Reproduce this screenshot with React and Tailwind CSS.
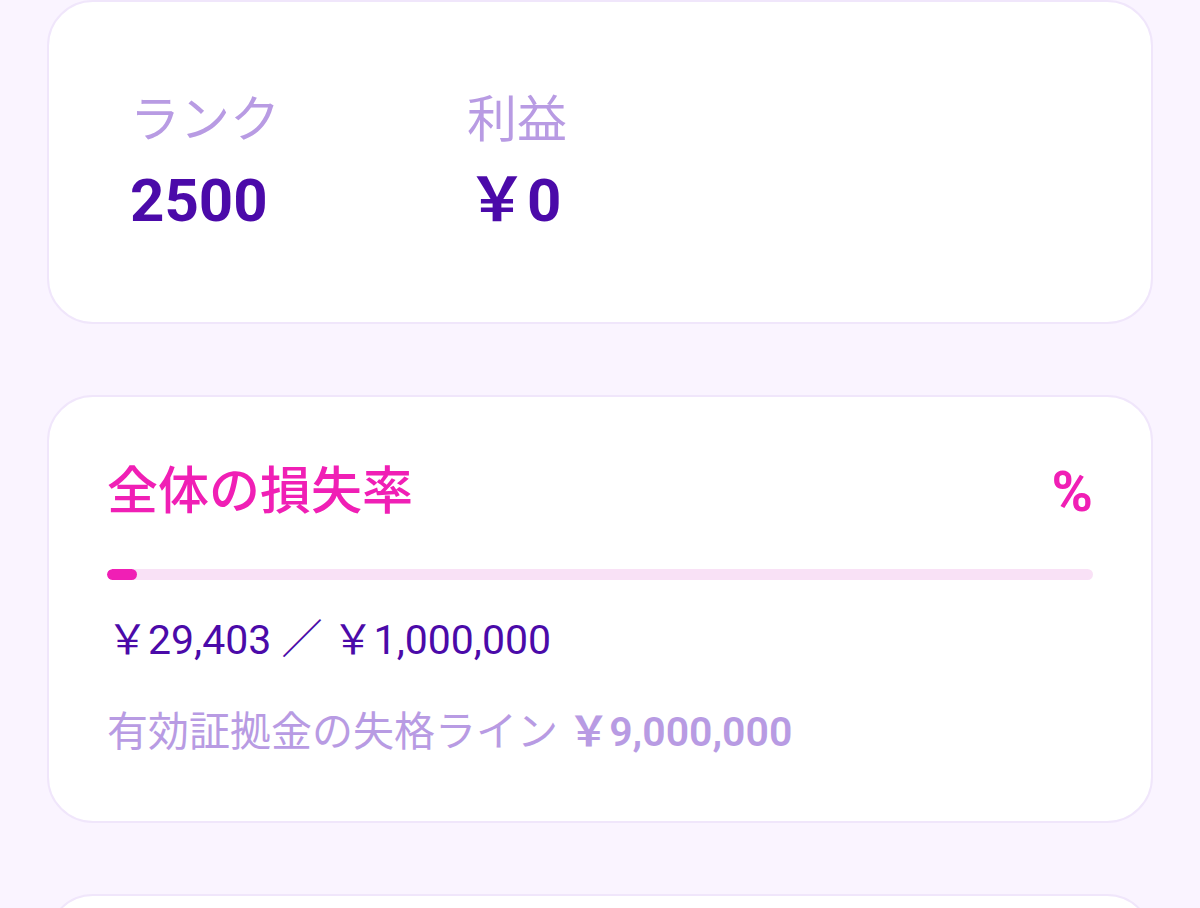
import React from 'react'

const font = { fontFamily: 'Roboto, "Noto Sans CJK JP", sans-serif' }

function StatCard() {
  return (
    <div className="bg-white border-2 border-[#f0e6fb] rounded-[46px] h-[324px] pl-[81px] pt-[87px]">
      <div className="flex">
        <div className="w-[337px] flex flex-col gap-[20px]">
          <span className="text-[50px] leading-[62px] text-[#b89be3]">ランク</span>
          <span className="text-[60px] leading-[60px] font-bold text-[#4b0aa9]">2500</span>
        </div>
        <div className="flex flex-col gap-[20px]">
          <span className="text-[50px] leading-[62px] text-[#b89be3]">利益</span>
          <span className="text-[60px] leading-[60px] font-bold text-[#4b0aa9]">￥0</span>
        </div>
      </div>
    </div>
  )
}

function LossCard() {
  const used = 29403
  const limit = 1000000
  const pct = Math.max(3, (used / limit) * 100)
  return (
    <div className="bg-white border-2 border-[#f0e6fb] rounded-[46px] px-[58px] pt-[64px] pb-[64px]">
      <div className="flex items-center justify-between">
        <span className="text-[51px] leading-[62px] font-medium text-[#f01fb5]">全体の損失率</span>
        <span className="text-[56px] leading-[62px] font-bold text-[#f01fb5]">%</span>
      </div>
      <div className="mt-[46px] h-[11px] rounded-full bg-[#f9e1f6] overflow-hidden">
        <div className="h-full rounded-full bg-[#f01fb5]" style={{ width: `${pct}%` }} />
      </div>
      <div className="mt-[35px] text-[41px] leading-[50px] text-[#4b0aa9]">
        ￥29,403 ／ ￥1,000,000
      </div>
      <div className="mt-[42px] text-[41px] leading-[50px] text-[#b89be3]">
        有効証拠金の失格ライン <span className="font-semibold">￥9,000,000</span>
      </div>
    </div>
  )
}

export default function App() {
  return (
    <div className="min-h-[908px] h-[908px] overflow-hidden bg-[#faf4ff]" style={font}>
      <div className="px-[47px] flex flex-col gap-[71px]">
        <StatCard />
        <LossCard />
        <div className="bg-white border-2 border-[#f0e6fb] rounded-[46px] h-[200px]" />
      </div>
    </div>
  )
}
